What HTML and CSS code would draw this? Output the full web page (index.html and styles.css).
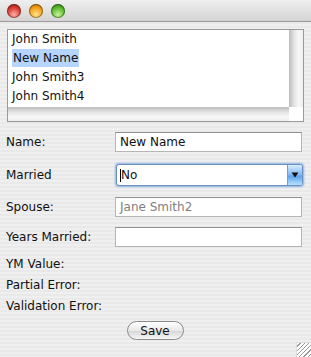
FILE: index.html
```html
<!DOCTYPE html>
<html lang="en">
<head>
  <meta charset="UTF-8">
  <title>Person Editor</title>
  <link rel="stylesheet" href="styles.css">
</head>
<body>

<div class="window">
  <div class="titlebar">
    <span class="light red"></span>
    <span class="light yellow"></span>
    <span class="light green"></span>
  </div>

  <div class="listbox">
    <ul class="list">
      <li>John Smith</li>
      <li><span class="selected">New Name</span></li>
      <li>John Smith3</li>
      <li>John Smith4</li>
    </ul>
    <div class="vscroll"></div>
    <div class="hscroll"></div>
    <div class="corner"></div>
  </div>

  <div class="form">
    <div class="row r-name">
      <label>Name:</label>
      <div class="field">New Name</div>
    </div>
    <div class="row r-married">
      <label>Married</label>
      <div class="combo">
        <span class="combo-text"><i class="caret"></i>No</span>
        <span class="combo-btn"><svg width="8" height="6" viewBox="0 0 8 6"><path d="M0.5 0.5 L7.5 0.5 L4 5.5 Z" fill="#111"/></svg></span>
      </div>
    </div>
    <div class="row r-spouse">
      <label>Spouse:</label>
      <div class="field disabled">Jane Smith2</div>
    </div>
    <div class="row r-years">
      <label>Years Married:</label>
      <div class="field"></div>
    </div>
    <div class="info">YM Value:</div>
    <div class="info">Partial Error:</div>
    <div class="info">Validation Error:</div>
  </div>

  <div class="actions">
    <button class="save">Save</button>
  </div>

  <div class="grip"></div>
</div>

</body>
</html>
```

FILE: styles.css
```css
body {
  margin: 0;
  font-family: 'DejaVu Sans', sans-serif;
  font-size: 12px;
  color: #111;
}
.window {
  position: relative;
  width: 311px;
  height: 357px;
  overflow: hidden;
  background: repeating-linear-gradient(#efefef 0 2px, #e9e9e9 2px 4px);
}
.titlebar {
  height: 21px;
  border-bottom: 1px solid #9a9a9a;
  background: linear-gradient(#efefef, #d4d4d4);
  border-radius: 6px 6px 0 0;
  display: flex;
  align-items: center;
  gap: 8px;
  padding-left: 7px;
}
.light {
  width: 14px;
  height: 14px;
  border-radius: 50%;
  box-shadow: inset 0 0 0 1px rgba(0,0,0,0.35);
}
.red { background: radial-gradient(circle at 50% 75%, #ffb0a8, #d83a32 55%, #8a1510); }
.yellow { background: radial-gradient(circle at 50% 75%, #ffe08a, #f0a018 55%, #a05a00); }
.green { background: radial-gradient(circle at 50% 75%, #c8f59a, #58b82c 55%, #2a6d10); }

.listbox {
  margin: 7px 0 0 7px;
  width: 295px;
  height: 91px;
  border: 1px solid #9a9a9a;
  display: grid;
  grid-template-columns: 281px 14px;
  grid-template-rows: 77px 14px;
  background: #fff;
}
.list {
  list-style: none;
  margin: 0;
  padding: 0 0 0 4px;
}
.list li {
  height: 19px;
  line-height: 19px;
}
.selected {
  background: #b5d5ff;
  padding: 2px 1px;
}
.vscroll {
  background: linear-gradient(90deg, #bdbdbd, #e6e6e6 40%, #f7f7f7 70%, #eeeeee);
}
.hscroll {
  background: linear-gradient(#bdbdbd, #e6e6e6 40%, #f7f7f7 70%, #eeeeee);
}
.corner { background: #fff; }

.form {
  padding: 10px 8px 0 6px;
}
.row {
  display: flex;
  align-items: center;
}
.row label {
  width: 109px;
}
.field {
  width: 181px;
  height: 18px;
  line-height: 18px;
  padding-left: 4px;
  background: #fff;
  border: 1px solid #b5b5b5;
  border-top-color: #8f8f8f;
}
.field.disabled { color: #808080; }
.r-name { height: 20px; }
.r-married { height: 22px; margin-top: 12px; }
.r-spouse { height: 20px; margin-top: 11px; }
.r-years { height: 20px; margin-top: 10px; }

.combo {
  margin-left: 1px;
  width: 185px;
  height: 20px;
  display: flex;
  border: 1px solid #6d8fc0;
  border-radius: 3px;
  box-shadow: 0 0 2px 1px #8ab1e6;
  background: #fff;
}
.combo-text {
  flex: 1;
  line-height: 20px;
  padding-left: 3px;
  display: flex;
  align-items: center;
}
.caret {
  width: 1px;
  height: 13px;
  background: #000;
}
.combo-btn {
  width: 14px;
  display: flex;
  align-items: center;
  justify-content: center;
  border-left: 1px solid #7a9ccc;
  border-radius: 0 2px 2px 0;
  background: linear-gradient(#d8ecfe, #7fb7f2 50%, #5ba2ec 55%, #b7e1ff);
}

.info {
  height: 21px;
  line-height: 21px;
}
.r-years + .info { margin-top: 7px; }

.actions {
  display: flex;
  justify-content: center;
  padding: 4px 0 0 0;
}
.save {
  width: 57px;
  height: 19px;
  margin-left: -1px;
  font-family: 'DejaVu Sans', sans-serif;
  font-size: 12px;
  color: #111;
  border: 1px solid #8a8a8a;
  border-radius: 10px;
  background: linear-gradient(#ffffff, #e9e9e9 50%, #d8d8d8 55%, #f6f6f6);
  padding: 0;
}
.grip {
  position: absolute;
  right: 0;
  bottom: 0;
  width: 14px;
  height: 14px;
  background: #fff repeating-linear-gradient(135deg, transparent 0 2px, #9a9a9a 2px 3px);
  border-top: 1px solid #ddd;
  border-left: 1px solid #ddd;
}
```
